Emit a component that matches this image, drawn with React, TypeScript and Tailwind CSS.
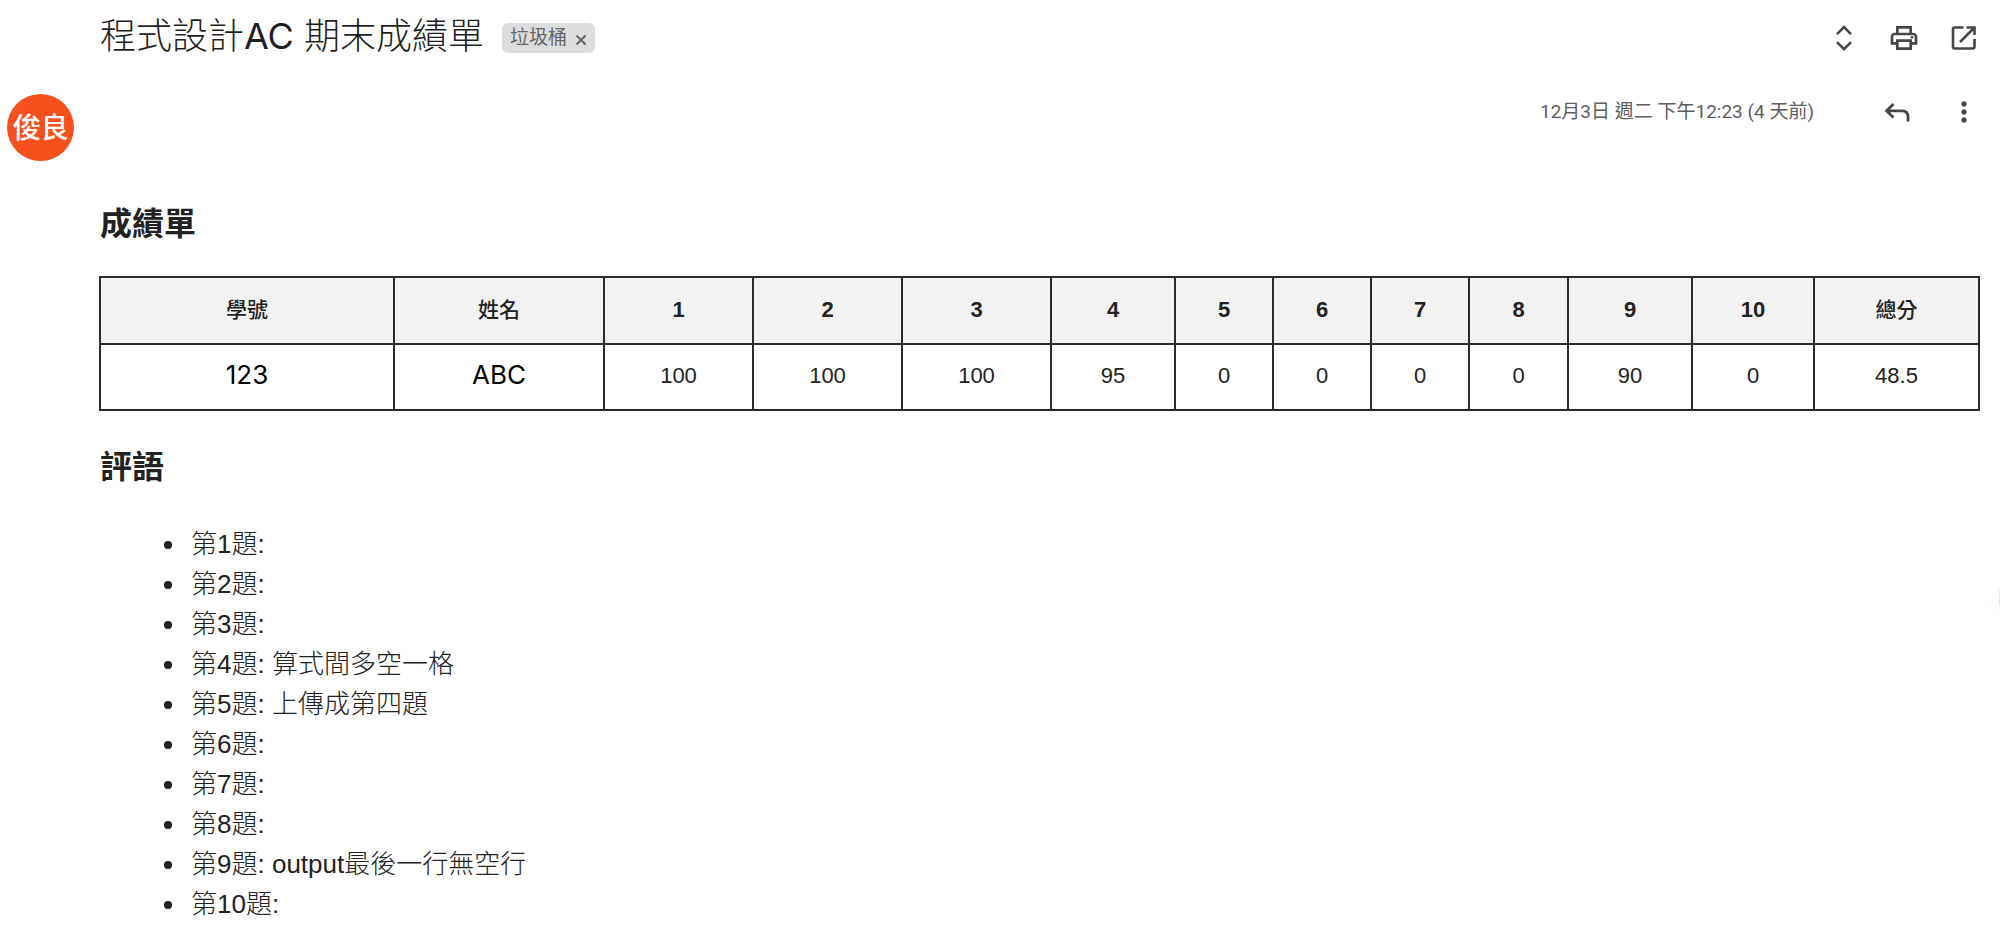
import React from "react";
import { MdOutlinePrint, MdMoreVert } from "react-icons/md";

const columns = [
  { label: "學號", value: "123", width: "w-[294px]", cjk: true, large: true },
  { label: "姓名", value: "ABC", width: "w-[210px]", cjk: true, large: true },
  { label: "1", value: "100", width: "w-[149px]" },
  { label: "2", value: "100", width: "w-[149px]" },
  { label: "3", value: "100", width: "w-[149px]" },
  { label: "4", value: "95", width: "w-[124px]" },
  { label: "5", value: "0", width: "w-[98px]" },
  { label: "6", value: "0", width: "w-[98px]" },
  { label: "7", value: "0", width: "w-[98px]" },
  { label: "8", value: "0", width: "w-[99px]" },
  { label: "9", value: "90", width: "w-[124px]" },
  { label: "10", value: "0", width: "w-[122px]" },
  { label: "總分", value: "48.5", width: "w-[165px]", cjk: true },
];

const comments = ["", "", "", "算式間多空一格", "上傳成第四題", "", "", "", "output最後一行無空行", ""];

function IconButton({ label, children }: { label: string; children: React.ReactNode }) {
  return (
    <button type="button" aria-label={label} className="flex size-8 items-center justify-center text-[#444746]">
      {children}
    </button>
  );
}

export default function App() {
  return (
    <main className="relative min-h-screen overflow-hidden bg-white pr-5 font-['Liberation_Sans','Noto_Sans_CJK_TC',sans-serif] text-[#222]">
      <header className="flex h-[76px] items-center pl-[100px]">
        <h1 className="pb-1 font-['Inter','Noto_Sans_CJK_TC',sans-serif] text-[36px] leading-[44px] font-light text-[#1f1f1f]">
          程式設計<span className="font-normal">AC</span> 期末成績單
        </h1>
        <span className="ml-[18px] flex h-[30px] items-center gap-2 rounded-md bg-[#ddd] px-2 text-[19px] leading-[30px] text-[#666]">
          垃圾桶
          <button type="button" aria-label="移除標籤">
            <svg viewBox="0 0 12 12" className="mt-1 size-3" fill="none" stroke="currentColor" strokeWidth="2">
              <path d="M1.5 1.5l9 9M10.5 1.5l-9 9" />
            </svg>
          </button>
        </span>
        <div className="ml-auto flex gap-7">
          <IconButton label="全部展開">
            <svg viewBox="0 0 32 32" className="size-8" fill="none" stroke="currentColor" strokeWidth="2.6">
              <path d="M9 12.2L16 5.2L23 12.2M9 20.2L16 27.2L23 20.2" />
            </svg>
          </IconButton>
          <IconButton label="全部列印"><MdOutlinePrint className="size-8" /></IconButton>
          <IconButton label="在新視窗中開啟">
            <svg viewBox="0 0 32 32" className="size-8" fill="none" stroke="currentColor" strokeWidth="2.6">
              <path d="M15.5 5.500H7Q5 5.500 5 7.500V24.500Q5 26.500 7 26.500H24.500Q26.500 26.500 26.500 24.500V17M18.500 5.500H26.500V13M26.500 5.500L12 20" />
            </svg>
          </IconButton>
        </div>
      </header>

      <div className="flex">
        <div className="w-[99px] shrink-0 pt-[18px] pl-[7px]">
          <div className="flex size-[67px] items-center justify-center rounded-full bg-[#f6511d] pt-0.5 text-[28px] font-medium text-white">
            俊良
          </div>
        </div>
        <div className="min-w-0 flex-1">
          <div className="flex h-[72px] items-center justify-end">
            <time className="font-['Roboto','Noto_Sans_CJK_TC',sans-serif] text-[19px] text-[#5e5e5e]">
              12月3日 週二 下午12:23 (4 天前)
            </time>
            <div className="ml-[68px] flex gap-[34px]">
              <IconButton label="回覆">
                <svg viewBox="0 0 32 32" className="size-8" fill="none" stroke="currentColor" strokeWidth="2.8" strokeLinejoin="round">
                  <path d="M11.5 8L4.5 14.8L11.5 21.600M4.5 14.8H20Q26 14.8 26 20.8V25.5" />
                </svg>
              </IconButton>
              <IconButton label="更多"><MdMoreVert className="size-8" /></IconButton>
            </div>
          </div>

          <h2 className="mt-14 pl-px text-[32px] leading-[40px] font-bold">成績單</h2>
          <table className="mt-8 w-full table-fixed border-collapse text-center text-[22px] leading-8">
            <thead>
              <tr className="h-[67px] bg-[#f2f2f2]">
                {columns.map((c) => (
                  <th
                    key={c.label}
                    scope="col"
                    className={`border-2 border-[#2b2b2b] pb-0.5 ${c.cjk ? "text-[21px] font-medium" : "font-bold"} ${c.width}`}
                  >
                    {c.label}
                  </th>
                ))}
              </tr>
            </thead>
            <tbody>
              <tr className="h-[66px]">
                {columns.map((c) => (
                  <td
                    key={c.label}
                    className={`border-2 border-[#2b2b2b] ${c.large ? "pb-1 font-['Inter',sans-serif] text-[26px] text-black" : "pb-0.5"}`}
                  >
                    {c.value}
                  </td>
                ))}
              </tr>
            </tbody>
          </table>

          <h2 className="mt-9 pl-px text-[32px] leading-[40px] font-bold">評語</h2>
          <ul className="mt-[37px] list-disc pl-[88px] text-[26px] leading-10 font-light">
            {comments.map((text, i) => (
              <li key={i} className="pl-1">第{i + 1}題: {text}</li>
            ))}
          </ul>
        </div>
      </div>
      <div className="absolute top-[590px] right-0 h-4 w-px rounded-full bg-[#ffdbe2] shadow-[0_4px_16px_4px_rgba(0,0,0,0.02)]" />
    </main>
  );
}
